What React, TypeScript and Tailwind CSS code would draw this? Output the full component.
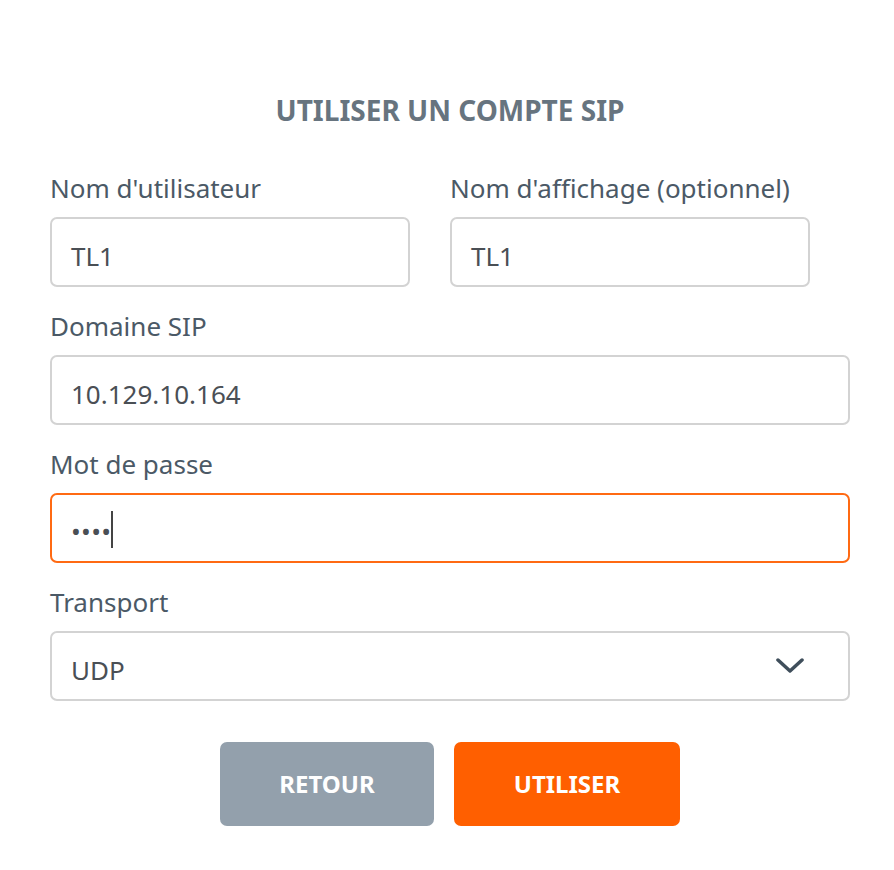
import React from "react";

const Label = ({ children }: { children: React.ReactNode }) => (
  <div className="text-[26px] leading-[36px] text-[#4b5966] mb-[11px]">{children}</div>
);

const Field = ({ value, wide = true }: { value: string; wide?: boolean }) => (
  <div
    className={`h-[70px] ${wide ? "w-full" : "w-[360px]"} border-2 border-[#d3d3d3] rounded-[7px] flex items-center px-[19px] pt-[8px] text-[26px] text-[#4a4f55]`}
  >
    {value}
  </div>
);

export default function App() {
  return (
    <div className="w-[894px] h-[870px] bg-white font-['Noto_Sans',sans-serif]">
      <div className="pt-[92px] pl-[50px] w-[850px]">
        <div className="text-center text-[28px] leading-[36px] font-bold text-[#67747f]">
          UTILISER UN COMPTE SIP
        </div>

        <div className="mt-[42px] flex gap-[40px]">
          <div>
            <Label>Nom d'utilisateur</Label>
            <Field value="TL1" wide={false} />
          </div>
          <div>
            <Label>Nom d'affichage (optionnel)</Label>
            <Field value="TL1" wide={false} />
          </div>
        </div>

        <div className="mt-[21px]">
          <Label>Domaine SIP</Label>
          <Field value="10.129.10.164" />
        </div>

        <div className="mt-[21px]">
          <Label>Mot de passe</Label>
          <div className="h-[70px] w-full border-2 border-[#ff6a13] rounded-[7px] flex items-center px-[19px] pt-[6px] text-[#4a4f55]">
            <span className="text-[26px] tracking-[0.3px]">••••</span>
            <span className="mb-[4px] w-[2px] h-[37px] bg-[#444]" />
          </div>
        </div>

        <div className="mt-[21px]">
          <Label>Transport</Label>
          <div className="h-[70px] w-full border-2 border-[#d3d3d3] rounded-[7px] flex items-center justify-between pl-[19px] pr-[44px] text-[26px] text-[#4a4f55]">
            <span className="pt-[8px]">UDP</span>
            <svg width="28" height="16" viewBox="0 0 28 16" fill="none">
              <path d="M2 2 L14 13 L26 2" stroke="#3f4e5b" strokeWidth="3.5" strokeLinecap="round" strokeLinejoin="round" />
            </svg>
          </div>
        </div>

        <div className="mt-[41px] flex justify-center gap-[20px]">
          <button className="w-[214px] h-[84px] rounded-[7px] bg-[#93a0ac] text-white text-[24px] font-bold">
            RETOUR
          </button>
          <button className="w-[226px] h-[84px] rounded-[7px] bg-[#ff5f00] text-white text-[24px] font-bold">
            UTILISER
          </button>
        </div>
      </div>
    </div>
  );
}
